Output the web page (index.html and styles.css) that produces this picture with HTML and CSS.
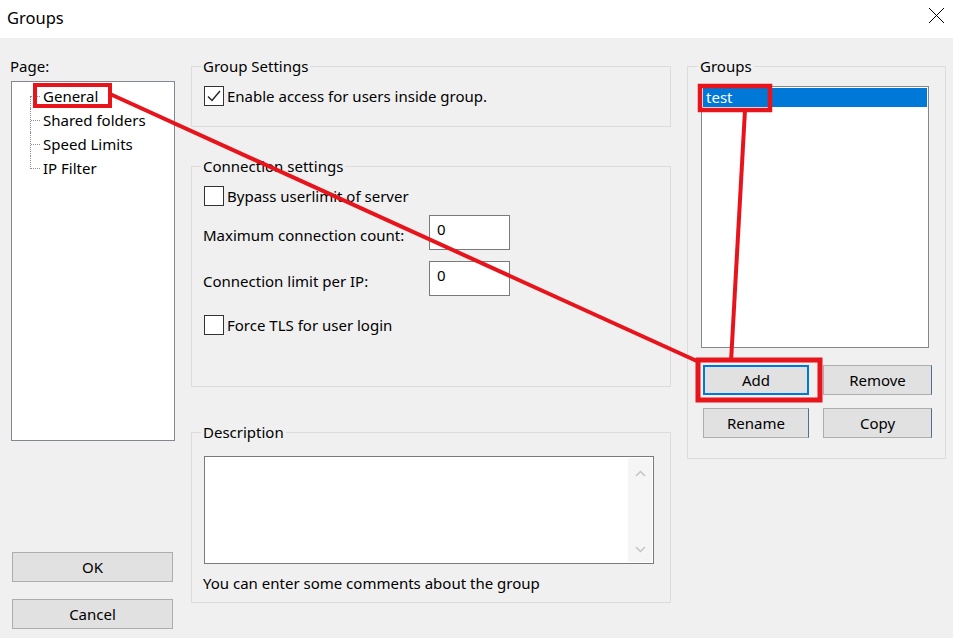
FILE: index.html
```html
<!doctype html>
<html lang="en">
    <head>
        <meta charset="UTF-8" />
        <title>Groups</title>
        <link rel="stylesheet" href="styles.css">
    </head>
    <body>
        <div class="window">
            <div class="titlebar">
                <span class="title">Groups</span>
                <svg class="close" width="17" height="17" viewBox="0 0 17 17">
                    <path d="M1 1 L16 16 M16 1 L1 16" stroke="#000" stroke-width="1" fill="none" />
                </svg>
            </div>

            <div class="dialog">
                <!-- Page tree + OK/Cancel -->
                <div class="col-left">
                    <div class="page-label">Page:</div>
                    <div class="tree">
                        <div class="tree-item">General</div>
                        <div class="tree-item">Shared folders</div>
                        <div class="tree-item">Speed Limits</div>
                        <div class="tree-item">IP Filter</div>
                    </div>
                    <button class="btn btn-ok">OK</button>
                    <button class="btn btn-cancel">Cancel</button>
                </div>

                <!-- Settings -->
                <div class="col-mid">
                    <fieldset class="group group-settings">
                        <legend>Group Settings</legend>
                        <label class="check">
                            <span class="box">
                                <svg width="18" height="18" viewBox="0 0 18 18">
                                    <path d="M3 9.5 L7 13.5 L15 4" stroke="#222" stroke-width="1.4" fill="none" />
                                </svg>
                            </span>
                            Enable access for users inside group.
                        </label>
                    </fieldset>

                    <fieldset class="group group-connection">
                        <legend>Connection settings</legend>
                        <label class="check"><span class="box"></span>Bypass userlimit of server</label>
                        <div class="field field-first">
                            <span>Maximum connection count:</span>
                            <div class="input">0</div>
                        </div>
                        <div class="field field-second">
                            <span>Connection limit per IP:</span>
                            <div class="input">0</div>
                        </div>
                        <label class="check check-tls"><span class="box"></span>Force TLS for user login</label>
                    </fieldset>

                    <fieldset class="group group-description">
                        <legend>Description</legend>
                        <div class="textarea">
                            <div class="text-body"></div>
                            <div class="scrollbar">
                                <svg width="11" height="7" viewBox="0 0 11 7">
                                    <path d="M1 6 L5.5 1.5 L10 6" stroke="#c4c4c4" stroke-width="1.5" fill="none" />
                                </svg>
                                <svg width="11" height="7" viewBox="0 0 11 7">
                                    <path d="M1 1 L5.5 5.5 L10 1" stroke="#c4c4c4" stroke-width="1.5" fill="none" />
                                </svg>
                            </div>
                        </div>
                        <div class="hint">You can enter some comments about the group</div>
                    </fieldset>
                </div>

                <!-- Groups list -->
                <div class="col-right">
                    <fieldset class="group group-list">
                        <legend>Groups</legend>
                        <div class="listbox">
                            <div class="list-row selected">test</div>
                        </div>
                        <div class="list-buttons">
                            <button class="btn btn-focus">Add</button>
                            <button class="btn btn-edge">Remove</button>
                            <button class="btn btn-edge">Rename</button>
                            <button class="btn btn-edge">Copy</button>
                        </div>
                    </fieldset>
                </div>
            </div>

            <!-- red markup drawn over the dialog -->
            <svg class="markup" width="953" height="638" viewBox="0 0 953 638">
                <g stroke="#e8141c" fill="none">
                    <rect x="35" y="85" width="75" height="21" stroke-width="4" />
                    <rect x="700" y="86" width="70" height="24" stroke-width="4.5" />
                    <rect x="698" y="360" width="122" height="40" stroke-width="5" />
                    <line x1="110" y1="94" x2="699" y2="362" stroke-width="4" />
                    <line x1="745" y1="110" x2="731" y2="362" stroke-width="4" />
                </g>
            </svg>
        </div>
    </body>
</html>
```

FILE: styles.css
```css
body {
    margin: 0;
    font-family: "Noto Sans", sans-serif;
    font-size: 15px;
    color: #000;
    background-color: #f0f0f0;
}
.window {
    position: relative;
    width: 953px;
    height: 638px;
    overflow: hidden;
    background-color: #f0f0f0;
}
.titlebar {
    height: 38px;
    background-color: #fff;
    display: flex;
    align-items: center;
    justify-content: space-between;
    padding: 0 8px 0 7px;
    box-sizing: border-box;
}
.title {
    font-size: 16.5px;
    margin-top: -4px;
}
.close {
    margin-top: -8px;
}
.dialog {
    display: grid;
    grid-template-columns: 164px 480px 259px;
    column-gap: 16px;
    align-items: start;
    padding: 18px 0 0 11px;
}

/* left column */
.col-left {
    display: flex;
    flex-direction: column;
}
.page-label {
    line-height: 20px;
    margin-left: -1px;
}
.tree {
    margin-top: 5px;
    height: 360px;
    box-sizing: border-box;
    border: 1px solid #828790;
    background-color: #fff;
    padding-top: 2px;
}
.tree-item {
    position: relative;
    height: 24px;
    line-height: 24px;
    padding-left: 31px;
}
.tree-item::before {
    content: "";
    position: absolute;
    left: 18px;
    top: 0;
    bottom: 0;
    border-left: 1px dotted #909090;
}
.tree-item:first-child::before {
    top: 12px;
}
.tree-item:last-child::before {
    bottom: 11px;
}
.tree-item::after {
    content: "";
    position: absolute;
    left: 19px;
    top: 12px;
    width: 9px;
    border-top: 1px dotted #909090;
}
.btn {
    height: 30px;
    box-sizing: border-box;
    border: 1px solid #adadad;
    background-color: #e1e1e1;
    font: inherit;
    color: #000;
    padding: 0;
}
.btn-ok {
    margin: 111px 0 0 1px;
    width: 161px;
}
.btn-cancel {
    margin: 17px 0 0 1px;
    width: 161px;
}
.btn-focus {
    border: 2px solid #0078d7;
}
.btn-edge {
    border-right-color: #4f6f91;
}

/* group boxes */
.group {
    margin: 0;
    padding: 10px 15px 20px 12px;
    border: 1px solid #dcdcdc;
    min-width: 0;
}
.group legend {
    padding: 0 2px;
    margin-left: -3px;
    line-height: 20px;
}
.check {
    display: flex;
    align-items: center;
    height: 20px;
    gap: 3px;
}
.box {
    width: 20px;
    height: 20px;
    box-sizing: border-box;
    border: 1px solid #333;
    background-color: #fff;
    display: flex;
    align-items: center;
    justify-content: center;
}
.group-connection {
    margin-top: 29px;
    padding-bottom: 51px;
}
.field {
    display: grid;
    grid-template-columns: 226px 81px;
    align-items: center;
    margin-left: -1px;
}
.field span {
    padding-top: 4px;
}
.field-first {
    margin-top: 9px;
}
.field-second {
    margin-top: 11px;
}
.input {
    height: 35px;
    box-sizing: border-box;
    border: 1px solid #7a7a7a;
    background-color: #fff;
    padding: 3px 0 0 7px;
    line-height: 20px;
}
.check-tls {
    margin-top: 19px;
}
.group-description {
    margin-top: 35px;
    padding-top: 14px;
    padding-bottom: 9px;
}
.textarea {
    display: flex;
    width: 450px;
    height: 108px;
    box-sizing: border-box;
    border: 1px solid #7a7a7a;
    background-color: #fff;
}
.text-body {
    flex: 1;
}
.scrollbar {
    width: 24px;
    margin: 1px 1px 1px 0;
    background-color: #f5f5f5;
    display: flex;
    flex-direction: column;
    justify-content: space-between;
    align-items: center;
    padding: 12px 0 9px;
}
.hint {
    margin: 9px 0 0 -1px;
    line-height: 20px;
}

/* groups list */
.group-list {
    padding-left: 13px;
}
.listbox {
    width: 228px;
    height: 262px;
    box-sizing: border-box;
    border: 1px solid #828790;
    background-color: #fff;
    padding: 1px;
}
.list-row {
    height: 19px;
    line-height: 19px;
    padding-left: 3px;
}
.list-row.selected {
    background-color: #0078d7;
    color: #fff;
}
.list-buttons {
    display: grid;
    grid-template-columns: 106px 109px;
    column-gap: 14px;
    row-gap: 13px;
    margin: 17px 0 0 2px;
}

/* annotation overlay */
.markup {
    position: absolute;
    left: 0;
    top: 0;
    pointer-events: none;
}
```
